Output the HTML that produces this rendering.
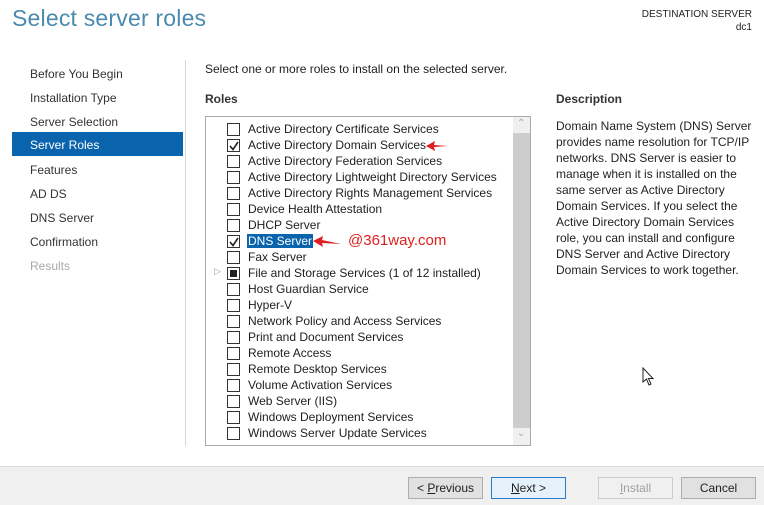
<!DOCTYPE html>
<html><head><style>
*{margin:0;padding:0;box-sizing:border-box}
body{width:764px;height:505px;background:#fff;font-family:"Liberation Sans",sans-serif;color:#1e1e1e;position:relative;overflow:hidden;font-size:12px}
.a{position:absolute;white-space:nowrap}
.title{left:12px;top:5px;font-size:23px;color:#4a8ab0;font-weight:normal;letter-spacing:0.2px}
.nav{left:30px;font-size:12px;color:#333}
.cb{position:absolute;left:227px;width:13px;height:13px;border:1px solid #333;background:#fff}
.row{position:absolute;left:248px;font-size:12px;color:#1e1e1e}
.btn{position:absolute;top:477px;height:22px;border:1px solid #adadad;background:#e1e1e1;text-align:center;line-height:20px;font-size:12px}
</style></head><body>
<div class="a title">Select server roles</div>
<div class="a" style="right:12px;top:8px;font-size:10px;text-align:right;line-height:13px">DESTINATION SERVER<br>dc1</div>
<div class="a nav" style="top:67px">Before You Begin</div>
<div class="a nav" style="top:91px">Installation Type</div>
<div class="a nav" style="top:115px">Server Selection</div>
<div class="a" style="left:12px;top:132px;width:171px;height:24px;background:#0a64ad"></div>
<div class="a nav" style="top:138px;color:#fff">Server Roles</div>
<div class="a nav" style="top:163px">Features</div>
<div class="a nav" style="top:187px">AD DS</div>
<div class="a nav" style="top:211px">DNS Server</div>
<div class="a nav" style="top:235px">Confirmation</div>
<div class="a nav" style="top:259px;color:#a8a8a8">Results</div>
<div class="a" style="left:185px;top:60px;width:1px;height:386px;background:#d6d6d6"></div>
<div class="a" style="left:205px;top:62px">Select one or more roles to install on the selected server.</div>
<div class="a" style="left:205px;top:92px;font-weight:bold;color:#333">Roles</div>
<div class="a" style="left:556px;top:92px;font-weight:bold;color:#333">Description</div>
<div class="a" style="left:556px;top:118px;line-height:16px;white-space:normal;width:200px;color:#222">Domain Name System (DNS) Server provides name resolution for TCP/IP networks. DNS Server is easier to manage when it is installed on the same server as Active Directory Domain Services. If you select the Active Directory Domain Services role, you can install and configure DNS Server and Active Directory Domain Services to work together.</div>
<div class="a" style="left:205px;top:116px;width:326px;height:330px;border:1px solid #aaa"></div>
<div class="a" style="left:513px;top:117px;width:17px;height:328px;background:#f0f0f0"></div>
<div class="a" style="left:513px;top:133px;width:17px;height:295px;background:#cdcdcd"></div>
<div class="a" style="left:517px;top:118px;font-size:10px;color:#aaa">&#8963;</div>
<div class="a" style="left:517px;top:428px;font-size:10px;color:#aaa">&#8964;</div>
<div id="rows"></div>
<script>
var items=["Active Directory Certificate Services","Active Directory Domain Services","Active Directory Federation Services","Active Directory Lightweight Directory Services","Active Directory Rights Management Services","Device Health Attestation","DHCP Server","DNS Server","Fax Server","File and Storage Services (1 of 12 installed)","Host Guardian Service","Hyper-V","Network Policy and Access Services","Print and Document Services","Remote Access","Remote Desktop Services","Volume Activation Services","Web Server (IIS)","Windows Deployment Services","Windows Server Update Services"];
var h="";
items.forEach(function(t,i){var y=123+i*16;
var inner="";
if(i==1||i==7)inner='<svg style="position:absolute;left:1px;top:1px" width="10" height="10"><path d="M1 5 L4 8.5 L9 1" fill="none" stroke="#222" stroke-width="1.6"/></svg>';
if(i==9)inner='<span style="position:absolute;left:2px;top:2px;width:7px;height:7px;background:#222"></span>';
h+='<div class="cb" style="top:'+y+'px">'+inner+'</div>';
var st=i==7?'background:#0a64ad;color:#fff;padding:0 1px;left:247px':'';
h+='<div class="row" style="top:'+(y-1)+'px;'+st+'">'+t+'</div>';
if(i==9)h+='<div class="a" style="left:214px;top:'+(y-1)+'px;font-size:9px;color:#999">&#9655;</div>';
});
document.getElementById("rows").innerHTML=h;
</script>
<svg class="a" style="left:425px;top:140px" width="24" height="12"><path d="M1 6 L10 1 L9 5 L23 6 L9 7 L10 11Z" fill="#e02020"/></svg>
<svg class="a" style="left:312px;top:235px" width="30" height="14"><path d="M1 6 L11 1 L10 5 L29 9 L10 8 L11 12Z" fill="#e02020"/></svg>
<div class="a" style="left:348px;top:232px;font-size:15px;color:#e02020">@361way.com</div>
<svg class="a" style="left:642px;top:367px" width="14" height="20"><path d="M1 1 L1 15 L4.5 12 L7 18 L9 17 L6.5 11.5 L11 11.5Z" fill="#fff" stroke="#222" stroke-width="1"/></svg>
<div class="a" style="left:0;top:466px;width:764px;height:39px;background:#f0f0f0;border-top:1px solid #dcdcdc"></div>
<div class="btn" style="left:408px;width:75px"><span>&lt; <u>P</u>revious</span></div>
<div class="btn" style="left:491px;width:75px;border-color:#2a7ad0;background:#e5f1fb"><u>N</u>ext &gt;</div>
<div class="btn" style="left:598px;width:75px;background:#f0f0f0;border-color:#ccc;color:#a0a0a0"><u>I</u>nstall</div>
<div class="btn" style="left:681px;width:75px">Cancel</div>
</body></html>
